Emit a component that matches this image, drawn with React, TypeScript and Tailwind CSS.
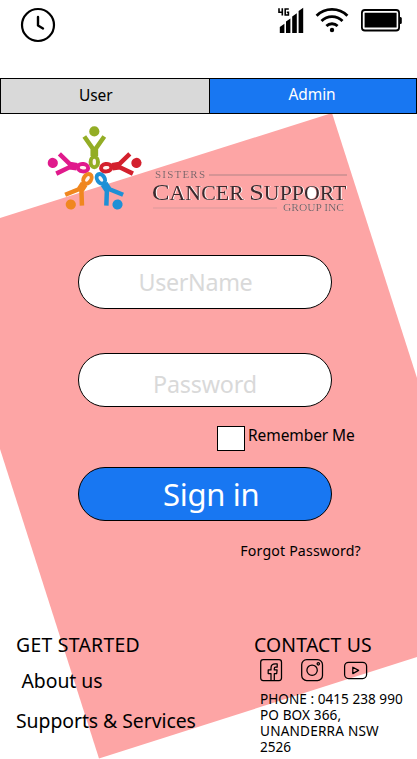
import React from "react";

const armPath =
  "M-10 -26.5 L-1.6 -14.5 V-7 M10 -26.5 L1.6 -14.5 V-7";

function Figure({ x, y, angle, color }: { x: number; y: number; angle: number; color: string }) {
  return (
    <g transform={`translate(${x} ${y}) rotate(${angle})`}>
      <circle cx="0" cy="-31.6" r="5.1" fill={color} />
      <path d={armPath} fill="none" stroke={color} strokeWidth="4.5" />
      <ellipse cx="0" cy="-1" rx="3.7" ry="5.2" fill="#fff3ee" stroke={color} strokeWidth="4" />
    </g>
  );
}

function Logo() {
  return (
    <svg width="310" height="92" viewBox="42 122 310 92" className="block">
      <Figure x={94.3} y={163} angle={0} color="#93ad25" />
      <Figure x={84} y={167.9} angle={-81} color="#e01a8c" />
      <Figure x={105.2} y={167.9} angle={81} color="#d3202d" />
      <Figure x={88} y={178} angle={213} color="#f0871f" />
      <Figure x={100.3} y={178} angle={147} color="#1e90d6" />
      <g fontFamily="'Liberation Serif', serif">
        <text x="155" y="178" fontSize="11" textLength="50" fill="#835a5e" className="drop-shadow-[0.5px_0.5px_0_#fbdcdc]">SISTERS</text>
        <path d="M209 175H347" stroke="#c98f90" strokeWidth="1.3" />
        <ellipse cx="310.5" cy="193" rx="6" ry="6" fill="#fff" />
        <text x="152" y="200" fontSize="24" textLength="194.5" lengthAdjust="spacingAndGlyphs" fill="#3b2a2e" className="drop-shadow-[1px_0.3px_0_#fff]">
          C<tspan fontSize="20">ANCER </tspan>S<tspan fontSize="20">UPPORT</tspan>
        </text>
        <path d="M153 208H277" stroke="#d99a9b" strokeWidth="1.2" />
        <text x="283" y="211.3" fontSize="10" textLength="61" lengthAdjust="spacingAndGlyphs" fill="#7d5559" className="drop-shadow-[0.8px_0.6px_0_#fff]">GROUP INC</text>
      </g>
    </svg>
  );
}

function StatusBar() {
  return (
    <header className="flex h-[78px] justify-between pl-5 pr-[14px] pt-[7px]">
      <svg width="36" height="36" viewBox="20 7 36 36" fill="none" stroke="#000">
        <circle cx="38" cy="25" r="16" strokeWidth="2.2" />
        <path d="M38 17v8.5l5 3" strokeWidth="2.4" strokeLinecap="round" strokeLinejoin="round" />
      </svg>
      <svg width="126" height="30" viewBox="277 7 126 30">
        <path d="M279.8 27l4.6-3.2V33h-4.6zM286 21.5l4.4-3V33H286zM292.2 16.5l4.6-3.2V33h-4.6zM298.6 11l4.6-3.2V33h-4.6z" />
        <path d="M279 8.3v4h3.3M282.3 8.3v7.3M288.8 9h-3.6v6h3.2v-2.7h-1.6" fill="none" stroke="#000" strokeWidth="1.6" />
        <g fill="none" stroke="#000" strokeWidth="2.8">
          <path d="M316.6 15.8C325 7.3 339 7.3 347.4 15.8" />
          <path d="M321.5 21C327.3 15.2 336.7 15.2 342.5 21" />
          <path d="M326.4 26C329.5 23 334.5 23 337.6 26" />
        </g>
        <circle cx="332" cy="30" r="2.2" />
        <rect x="361.9" y="10" width="37.2" height="20.5" rx="3" fill="none" stroke="#000" strokeWidth="1.8" />
        <path d="M364.6 12.8h32v14.8h-32z" />
        <path d="M399.5 17h1q1.3 0 1.3 1.5v4q0 1.5-1.3 1.5h-1z" />
      </svg>
    </header>
  );
}

function SocialIcons() {
  return (
    <svg width="108" height="23" viewBox="260 659 108 23" fill="none" stroke="#000" strokeWidth="1.25" className="ml-[6px] block">
      <rect x="260.7" y="659.7" width="20.8" height="20.8" rx="2.5" />
      <path strokeLinejoin="round" d="M271 680.3v-6.8h-2.8v-3.6h2.8v-2c0-2.6 1.5-4 4.2-4h2v3.3h-1.7c-.9 0-1.2.4-1.2 1.2v1.5h2.8l-.4 3.6h-2.4v6.8" />
      <rect x="301.7" y="659.7" width="20.8" height="20.8" rx="5" />
      <circle cx="312.1" cy="670.2" r="5.2" />
      <circle cx="318.3" cy="663.8" r="1.2" />
      <rect x="344.6" y="662.3" width="22" height="16.2" rx="4" />
      <path strokeLinejoin="round" d="M352.8 667.2v6.4l5.8-3.2z" />
    </svg>
  );
}

export default function App() {
  return (
    <div className="relative h-[759px] w-[417px] overflow-hidden bg-white font-['Noto_Sans',sans-serif] text-black">
      <div className="absolute inset-0 bg-[#fda5a5] [clip-path:polygon(332px_113px,417px_378px,417px_657px,99px_758.5px,0px_449px,0px_218px)]" />
      <div className="relative flex h-full flex-col whitespace-nowrap">
        <StatusBar />
        <nav className="flex h-9 border border-black text-[15.5px] leading-6">
          <button className="flex w-[209px] items-center border-r border-black bg-[#d9d9d9] pb-[2px] pl-[78px] tracking-[-0.1px]">User</button>
          <button className="flex flex-1 items-center bg-[#1877f2] pb-[4px] pl-[78.5px] tracking-[-0.1px] text-white">Admin</button>
        </nav>
        <div className="ml-[42px] mt-2 h-[92px]">
          <Logo />
        </div>
        <main className="ml-[78px] mt-[41px] flex flex-col">
          <div className="flex h-[54px] w-[254px] items-center rounded-full border border-black bg-white pl-[59.5px] text-[23.3px] tracking-[-0.35px] text-[#d9d9d9]">UserName</div>
          <div className="mt-11 flex h-[54px] w-[254px] items-center rounded-full border border-black bg-white pl-[74px] pt-2 text-[23.3px] tracking-[-0.2px] text-[#d9d9d9]">Password</div>
          <label className="ml-[139px] mt-[19px] flex h-[25px] gap-[3px]">
            <span className="h-[25px] w-7 border border-black bg-white" />
            <span className="-mt-[3px] text-[15.5px] leading-6 tracking-[-0.08px]">Remember Me</span>
          </label>
          <button className="mt-4 flex h-[54px] w-[254px] items-center rounded-full border border-black bg-[#1877f2] pl-[84px] text-[31px] tracking-[-0.3px] text-white">Sign in</button>
          <a className="ml-[162.3px] mt-[20px] text-[14.2px] leading-5 tracking-[0.15px]">Forgot Password?</a>
        </main>
        <footer className="mt-[72px] flex text-[19.4px] leading-6">
          <div className="w-[254px] pl-4">
            <h2 className="tracking-[0.27px]">GET STARTED</h2>
            <p className="ml-[5.5px] mt-3 tracking-[-0.05px]">About us</p>
            <p className="mt-4 tracking-[-0.05px]">Supports &amp; Services</p>
          </div>
          <div>
            <h2 className="tracking-[0.18px]">CONTACT US</h2>
            <div className="mt-[2px] h-8">
              <SocialIcons />
            </div>
            <address className="ml-[6px] text-[13.6px] not-italic leading-4">
              <p className="tracking-[0.02px]">PHONE : 0415 238 990</p>
              <p className="tracking-[0.1px]">PO BOX 366,</p>
              <p className="tracking-[0.2px]">UNANDERRA NSW</p>
              <p>2526</p>
            </address>
          </div>
        </footer>
      </div>
    </div>
  );
}
